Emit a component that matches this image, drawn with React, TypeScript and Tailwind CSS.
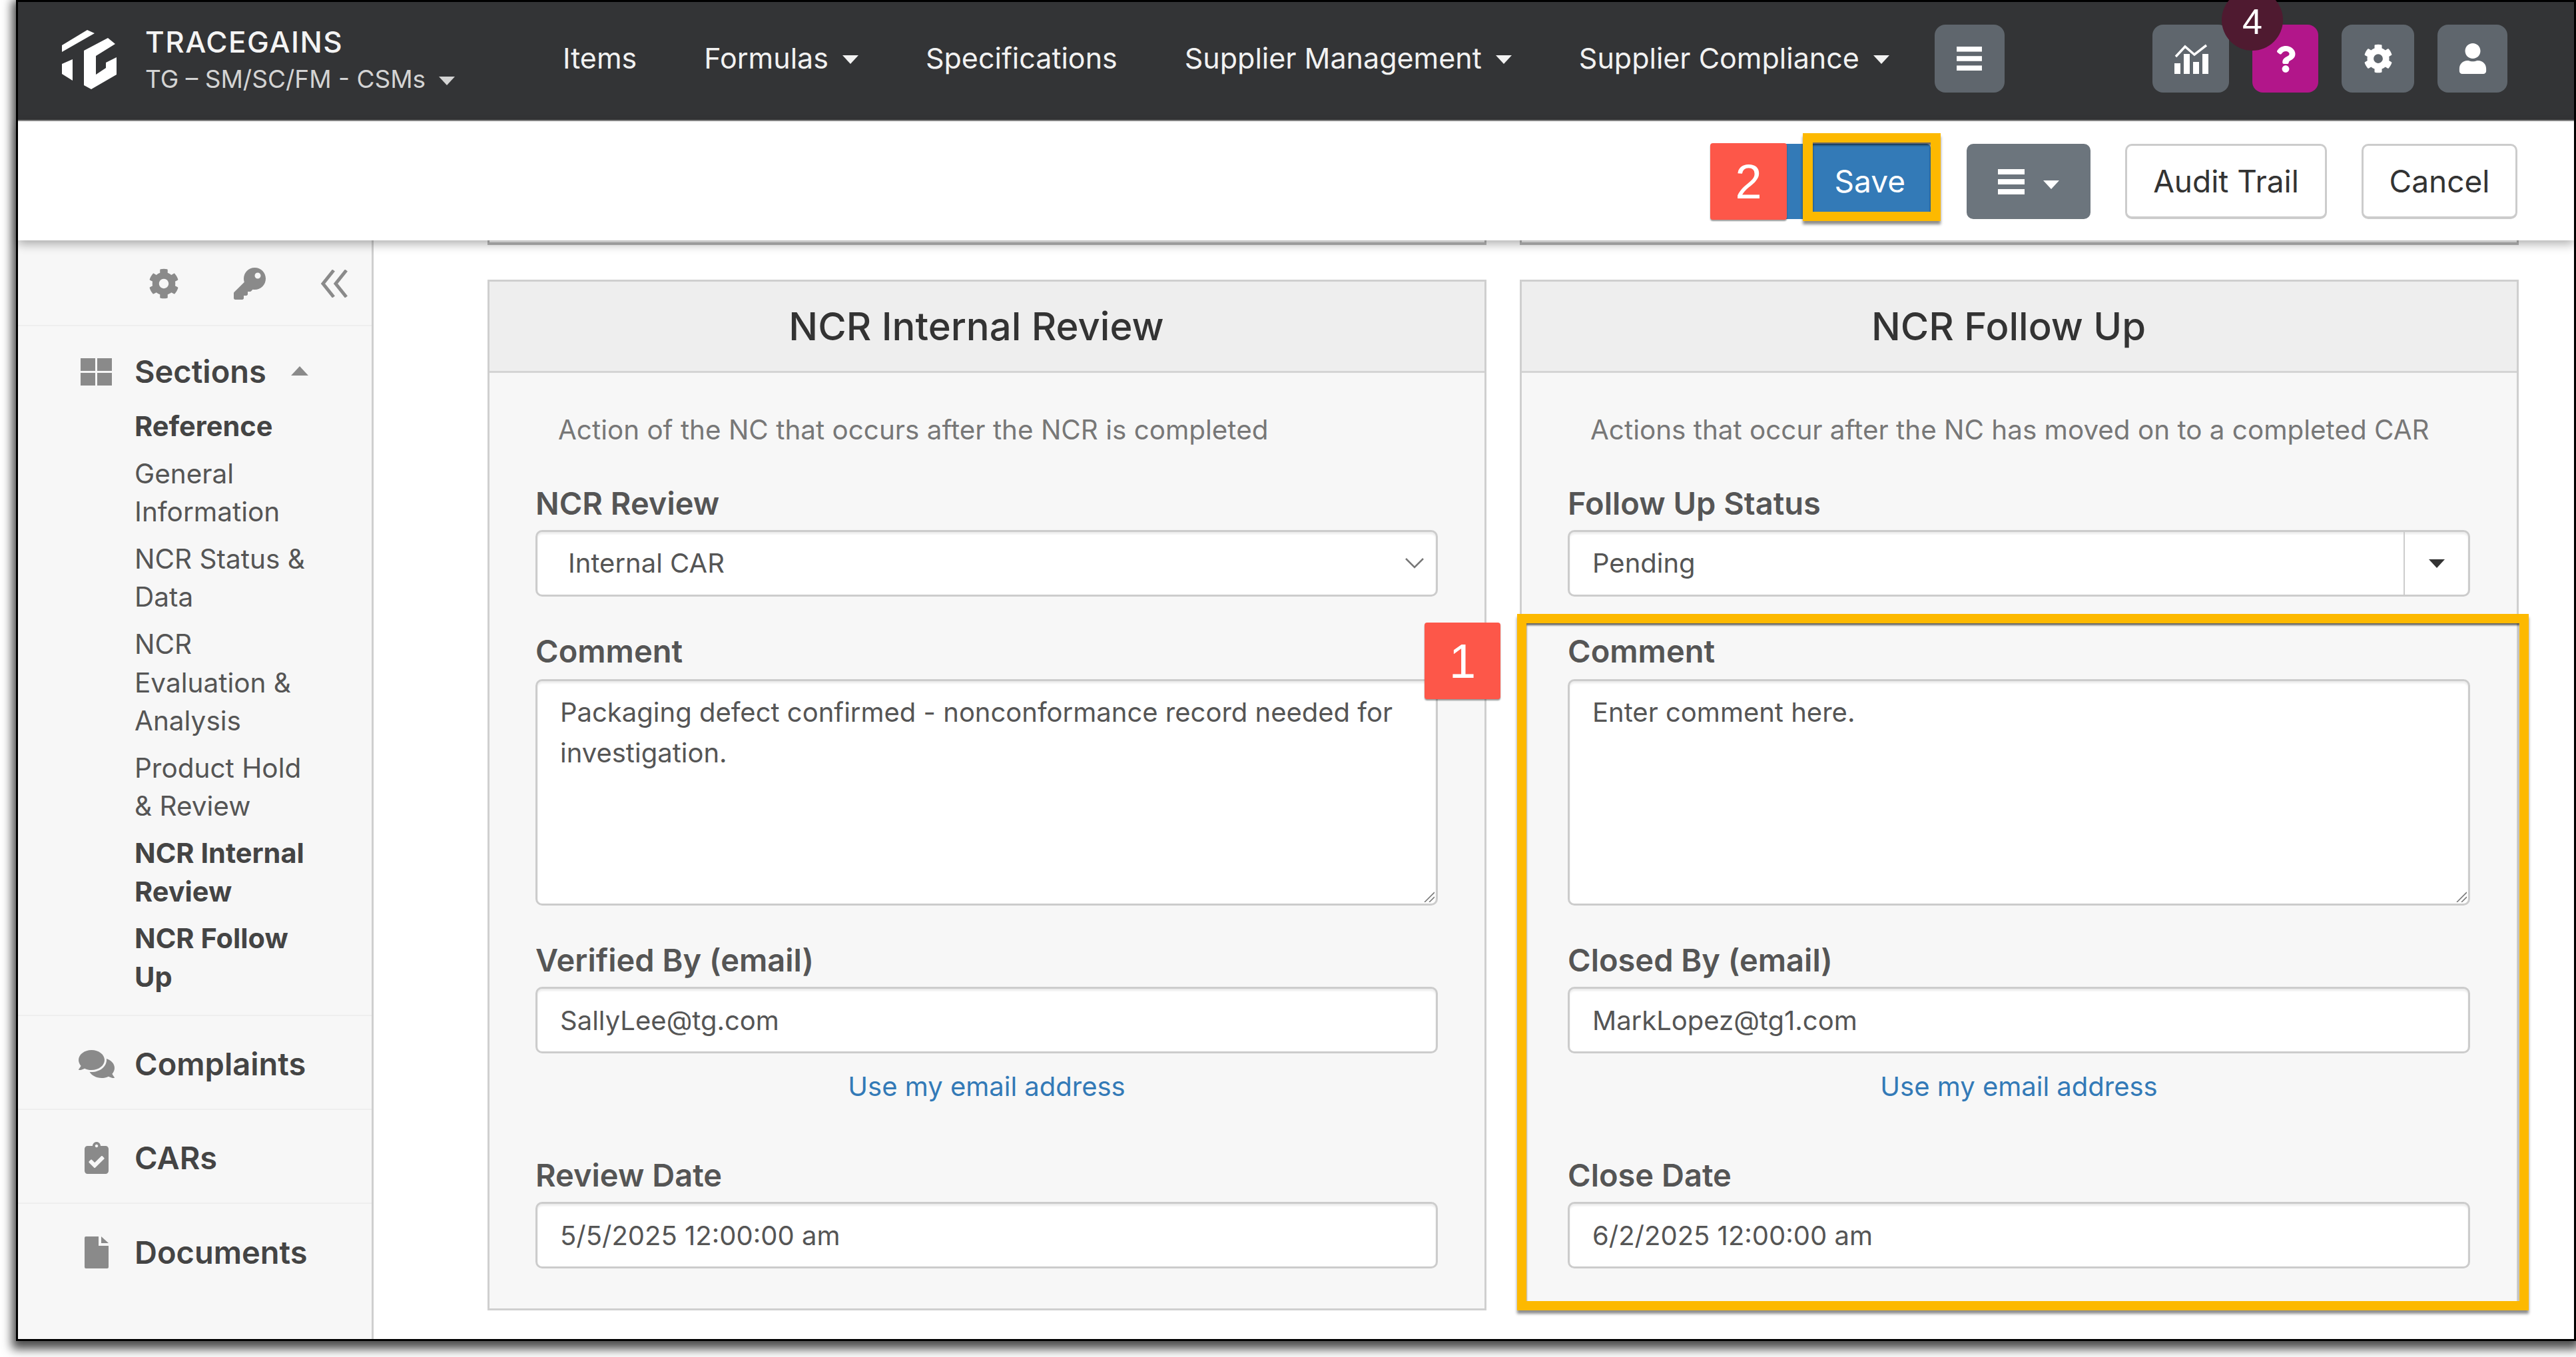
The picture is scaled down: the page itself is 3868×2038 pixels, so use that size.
import { ReactNode } from "react"
import { FaCog, FaKey, FaComments, FaClipboardCheck, FaQuestion, FaUser } from "react-icons/fa"

function Caret({ up, className }: { up?: boolean; className?: string }) {
  return (
    <svg viewBox="0 0 24 13" className={className} fill="currentColor">
      <polygon points={up ? "12,0 24,13 0,13" : "0,0 24,0 12,13"} />
    </svg>
  )
}

function Bars({ className }: { className?: string }) {
  return (
    <svg viewBox="0 0 40 38" className={className} fill="currentColor">
      <rect x="0" y="0" width="40" height="8" />
      <rect x="0" y="15" width="40" height="8" />
      <rect x="0" y="30" width="40" height="8" />
    </svg>
  )
}

function Logo() {
  return (
    <svg viewBox="0 0 120 130" className="h-[130px] w-[120px]" fill="#fff">
      <polygon points="14,44 52,21 63,26 14,54" />
      <polygon points="14,72 30,65 30,97 14,87" />
      <polygon points="47,52 83,33 94,42 65,60 65,88 80,78 80,70 96,62 96,88 58,110 47,104" />
    </svg>
  )
}

function ChartIcon() {
  return (
    <svg viewBox="0 0 52 46" className="h-[46px] w-[52px]">
      <polyline points="3,20 17,5 31,17 49,3" fill="none" stroke="#fff" strokeWidth="3.5" />
      <g fill="#fff">
        <rect x="1" y="30" width="9" height="16" />
        <rect x="15" y="16" width="9" height="30" />
        <rect x="29" y="28" width="9" height="18" />
        <rect x="43" y="16" width="9" height="30" />
      </g>
    </svg>
  )
}

function NavLink({ label, caret }: { label: string; caret?: boolean }) {
  return (
    <div className="flex items-center gap-[21px] text-[43px] leading-none text-[#f2f2f2]">
      <span>{label}</span>
      {caret && <Caret className="mt-[4px] h-[13px] w-[24px] text-[#f2f2f2]" />}
    </div>
  )
}

function HeadButton({ children, className }: { children: ReactNode; className: string }) {
  return (
    <div className={`flex h-[102px] items-center justify-center rounded-[16px] text-white ${className}`}>
      {children}
    </div>
  )
}

function Header() {
  return (
    <div className="relative flex h-[179px] items-center border-b-[2px] border-[#8a8a8a] bg-[#333436] pr-[100px]">
      <div className="ml-[52px] mt-[-6px]">
        <Logo />
      </div>
      <div className="ml-[19px] w-[567px] pb-[8px]">
        <div className="text-[44px] leading-[58px] font-medium tracking-[1.5px] text-[#f4f4f4]">TRACEGAINS</div>
        <div className="mt-[4px] flex items-center gap-[18px] text-[37px] leading-[46px] text-[#d4d4d4]">
          TG – SM/SC/FM - CSMs
          <Caret className="mt-[6px] h-[13px] w-[28px]" />
        </div>
      </div>
      <div className="ml-[60px] flex items-center gap-[101px] pb-[8px]">
        <NavLink label="Items" />
        <NavLink label="Formulas" caret />
        <NavLink label="Specifications" />
        <NavLink label="Supplier Management" caret />
        <NavLink label="Supplier Compliance" caret />
      </div>
      <HeadButton className="ml-[68px] mb-[8px] w-[105px] bg-[#5f666d]">
        <Bars className="h-[36px] w-[40px]" />
      </HeadButton>
      <div className="ml-auto mb-[8px] flex gap-[35px]">
        <HeadButton className="w-[115px] bg-[#5f666d]">
          <ChartIcon />
        </HeadButton>
        <HeadButton className="w-[99px] bg-[#b2168a]">
          <FaQuestion className="mt-[2px] h-[40px] w-[40px]" />
        </HeadButton>
        <HeadButton className="w-[109px] bg-[#5f666d]">
          <FaCog className="h-[44px] w-[44px]" />
        </HeadButton>
        <HeadButton className="w-[105px] bg-[#5f666d]">
          <FaUser className="h-[46px] w-[42px]" />
        </HeadButton>
      </div>
    </div>
  )
}

function ToolButton({ label, className }: { label: string; className: string }) {
  return (
    <div className={`flex h-[113px] items-center justify-center rounded-[10px] border-[3px] border-[#ccc] border-b-[4px] bg-white text-[46px] text-[#333] ${className}`}>
      {label}
    </div>
  )
}

function Toolbar() {
  return (
    <div className="relative z-10 flex h-[179px] items-center justify-end gap-[52px] bg-white pr-[85px] pt-[2px] shadow-[0_6px_14px_rgba(0,0,0,0.3)]">
      <div className="mr-[2px] flex h-[113px] items-center rounded-[6px] bg-[#337ab7] pl-[152px] pr-[38px] text-[46px] text-white">
        Save
      </div>
      <div className="flex h-[113px] w-[186px] items-center justify-center gap-[28px] rounded-[10px] bg-[#6c757d] text-white">
        <Bars className="h-[38px] w-[40px]" />
        <Caret className="mt-[10px] h-[13px] w-[24px]" />
      </div>
      <ToolButton label="Audit Trail" className="w-[303px]" />
      <ToolButton label="Cancel" className="w-[234px]" />
    </div>
  )
}

const sections = [
  { lines: ["Reference"], bold: true },
  { lines: ["General", "Information"] },
  { lines: ["NCR Status &", "Data"] },
  { lines: ["NCR", "Evaluation &", "Analysis"] },
  { lines: ["Product Hold", "& Review"] },
  { lines: ["NCR Internal", "Review"], bold: true },
  { lines: ["NCR Follow", "Up"], bold: true },
]

function SideRow({ icon, label }: { icon: ReactNode; label: string }) {
  return (
    <div className="flex h-[141px] items-center border-b-[2px] border-[#eeeeee] pt-[4px] last:border-b-0">
      <div className="ml-[91px] mr-[30px] flex w-[54px] justify-center text-[#8a8a8a]">{icon}</div>
      <span className="text-[47px] font-semibold text-[#444]">{label}</span>
    </div>
  )
}

function Sidebar() {
  return (
    <div className="flex w-[534px] shrink-0 flex-col border-r-[3px] border-[#cfcfcf] bg-[#f7f7f7]">
      <div className="flex h-[129px] items-center justify-end gap-[82px] border-b-[2px] border-[#eeeeee] pr-[35px] pt-[2px] text-[#8a8a8a]">
        <FaCog className="h-[46px] w-[46px]" />
        <FaKey className="h-[48px] w-[48px]" />
        <svg viewBox="0 0 42 42" className="h-[42px] w-[42px]" fill="none" stroke="currentColor" strokeWidth="5">
          <polyline points="20,1 4,21 20,41" />
          <polyline points="39,1 23,21 39,41" />
        </svg>
      </div>
      <div className="flex h-[122px] items-center pt-[14px]">
        <div className="ml-[94px] grid w-[47px] grid-cols-2 gap-[3px]">
          <div className="h-[19px] bg-[#8a8a8a]" />
          <div className="h-[19px] bg-[#8a8a8a]" />
          <div className="h-[19px] bg-[#8a8a8a]" />
          <div className="h-[19px] bg-[#8a8a8a]" />
        </div>
        <span className="ml-[34px] text-[47px] font-semibold text-[#444]">Sections</span>
        <Caret up className="ml-[36px] mt-[-2px] h-[14px] w-[28px] text-[#8a8a8a]" />
      </div>
      <div className="flex flex-col gap-[13px] border-b-[2px] border-[#eeeeee] pb-[28px] pl-[175px]">
        {sections.map((s) => (
          <div key={s.lines[0]} className={`leading-[57.6px] ${s.bold ? "text-[41.5px] font-bold text-[#444]" : "text-[40.5px] text-[#555]"}`}>
            {s.lines.map((l) => (
              <div key={l}>{l}</div>
            ))}
          </div>
        ))}
      </div>
      <SideRow icon={<FaComments className="h-[48px] w-[54px]" />} label="Complaints" />
      <SideRow icon={<FaClipboardCheck className="h-[48px] w-[36px]" />} label="CARs" />
      <SideRow
        icon={
          <svg viewBox="0 0 36 48" className="h-[48px] w-[36px]" fill="currentColor">
            <path d="M0 2 Q0 0 2 0 H21 V14 H36 V46 Q36 48 34 48 H2 Q0 48 0 46 Z" />
            <path d="M25 0 L36 10 H25 Z" />
          </svg>
        }
        label="Documents"
      />
    </div>
  )
}

function Label({ children }: { children: ReactNode }) {
  return <div className="text-[47px] leading-[58px] font-semibold text-[#555]">{children}</div>
}

function TextBox({ value }: { value: string }) {
  return (
    <input
      readOnly
      value={value}
      className="mt-[11px] block h-[100px] w-full rounded-[10px] border-[3px] border-[#ccc] bg-white px-[34px] text-[40px] text-[#555] shadow-[inset_0_3px_3px_rgba(0,0,0,0.08)] outline-none"
    />
  )
}

function Comment({ value }: { value: string }) {
  return (
    <div className="relative mt-[13px]">
      <textarea
        readOnly
        value={value}
        className="block h-[340px] w-full resize-none rounded-[10px] border-[3px] border-[#ccc] bg-white px-[34px] py-[16px] text-[40px] leading-[61px] text-[#555] shadow-[inset_0_3px_3px_rgba(0,0,0,0.08)] outline-none"
      />
      <svg viewBox="0 0 16 16" className="absolute bottom-[5px] right-[5px] h-[16px] w-[16px]" stroke="#777" strokeWidth="1.6">
        <line x1="1" y1="16" x2="16" y2="1" />
        <line x1="8" y1="16" x2="16" y2="8" />
      </svg>
    </div>
  )
}

function Panel({ title, hint, children }: { title: string; hint: string; children: ReactNode }) {
  return (
    <div className="w-[1500px] border-[3px] border-[#cfcfcf] bg-[#f7f7f7]">
      <div className="flex h-[137px] items-center justify-center border-b-[3px] border-[#d4d4d4] bg-[#eeeeee] pr-[32px] text-[58px] font-medium text-[#333]">
        {title}
      </div>
      <div className="pb-[60px] pl-[69px] pr-[70px] pt-[57px]">
        <div className="pl-[34px] text-[40.4px] leading-[58px] text-[#777]">{hint}</div>
        {children}
      </div>
    </div>
  )
}

function EmailLink() {
  return <div className="mt-[21px] text-center text-[40px] leading-[58px] text-[#337ab7]">Use my email address</div>
}

function Content() {
  return (
    <div className="min-w-0 flex-1 bg-white pl-[171px]">
      <div className="flex gap-[50px]">
        <div className="h-[7px] w-[1500px] border-b-[4px] border-x-[3px] border-[#bbb]" />
        <div className="h-[7px] w-[1500px] border-b-[4px] border-x-[3px] border-[#bbb]" />
      </div>
      <div className="mt-[52px] flex gap-[50px]">
        <Panel title="NCR Internal Review" hint="Action of the NC that occurs after the NCR is completed">
          <div className="mt-[52px]">
            <Label>NCR Review</Label>
            <div className="mt-[11px] flex h-[100px] items-center justify-between rounded-[10px] border-[3px] border-[#ccc] bg-white pl-[46px] pr-[18px] text-[40px] text-[#555] shadow-[inset_0_3px_3px_rgba(0,0,0,0.08)]">
              <span>Internal CAR</span>
              <svg viewBox="0 0 28 16" className="h-[16px] w-[28px]" fill="none" stroke="#777" strokeWidth="2.5">
                <polyline points="1,1 14,14 27,1" />
              </svg>
            </div>
          </div>
          <div className="mt-[53px]">
            <Label>Comment</Label>
            <Comment value="Packaging defect confirmed - nonconformance record needed for investigation." />
          </div>
          <div className="mt-[53px]">
            <Label>Verified By (email)</Label>
            <TextBox value="SallyLee@tg.com" />
          </div>
          <EmailLink />
          <div className="mt-[75px]">
            <Label>Review Date</Label>
            <TextBox value="5/5/2025 12:00:00 am" />
          </div>
        </Panel>
        <Panel title="NCR Follow Up" hint="Actions that occur after the NC has moved on to a completed CAR">
          <div className="mt-[52px]">
            <Label>Follow Up Status</Label>
            <div className="mt-[11px] flex h-[100px] items-stretch rounded-[10px] border-[3px] border-[#ccc] bg-white text-[40px] text-[#555] shadow-[inset_0_3px_3px_rgba(0,0,0,0.08)]">
              <span className="flex flex-1 items-center pl-[34px]">Pending</span>
              <span className="flex w-[97px] items-center justify-center border-l-[2px] border-[#ccc] text-[#333]">
                <Caret className="h-[13px] w-[24px]" />
              </span>
            </div>
          </div>
          <div className="mt-[53px]">
            <Label>Comment</Label>
            <Comment value="Enter comment here." />
          </div>
          <div className="mt-[53px]">
            <Label>Closed By (email)</Label>
            <TextBox value="MarkLopez@tg1.com" />
          </div>
          <EmailLink />
          <div className="mt-[75px]">
            <Label>Close Date</Label>
            <TextBox value="6/2/2025 12:00:00 am" />
          </div>
        </Panel>
      </div>
    </div>
  )
}

export default function App() {
  return (
    <div className="relative h-[2038px] w-[3868px] overflow-hidden bg-white font-['Inter','Liberation_Sans',sans-serif]">
      <div className="ml-[24px] flex h-[2014px] w-[3844px] flex-col border-[3px] border-black bg-white shadow-[0_6px_14px_6px_rgba(0,0,0,0.7)]">
        <Header />
        <Toolbar />
        <div className="flex min-h-0 flex-1">
          <Sidebar />
          <Content />
        </div>
      </div>

      {/* annotation layer */}
      <div className="absolute left-[3336px] top-[-16px] flex h-[92px] w-[92px] items-center justify-center rounded-full bg-[#4f1a30] pt-[4px] font-['Liberation_Sans',sans-serif] text-[54px] text-white">
        4
      </div>
      <div className="absolute left-[2568px] top-[215px] z-20 flex h-[115px] w-[115px] items-center justify-center rounded-[4px] bg-[#fd5749] font-['Liberation_Sans',sans-serif] text-[72px] text-white shadow-[0_2px_2px_rgba(0,0,0,0.4)]">
        2
      </div>
      <div className="absolute left-[2707px] top-[200px] z-20 h-[132px] w-[207px] border-x-[15px] border-b-[14px] border-t-[14px] border-[#fdb900] shadow-[0_5px_4px_rgba(0,0,0,0.45),inset_0_4px_3px_rgba(0,0,0,0.6)]" />
      <div className="absolute left-[2139px] top-[935px] z-20 flex h-[115px] w-[114px] items-center justify-center rounded-[4px] bg-[#fd5749] font-['Liberation_Sans',sans-serif] text-[72px] text-white shadow-[0_2px_2px_rgba(0,0,0,0.4)]">
        1
      </div>
      <div className="absolute left-[2278px] top-[922px] z-20 h-[1046px] w-[1519px] border-[14px] border-[#fdb900] shadow-[0_5px_4px_rgba(0,0,0,0.45),inset_0_3px_3px_rgba(0,0,0,0.6)]" />
    </div>
  )
}
